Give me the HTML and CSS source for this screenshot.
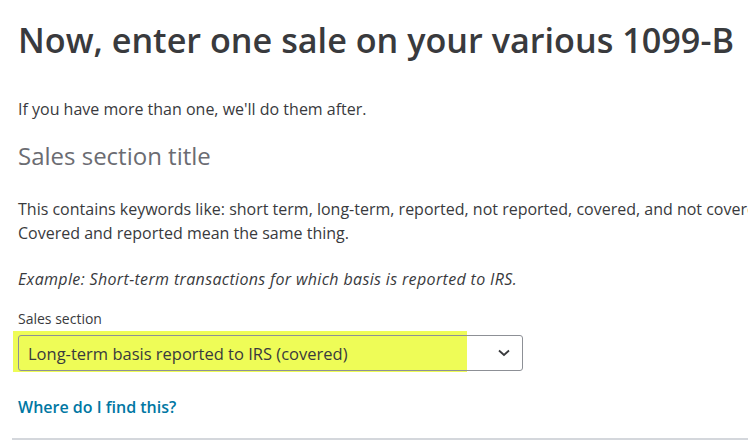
FILE: index.html
```html
<!DOCTYPE html>
<html lang="en">
<head>
  <meta charset="UTF-8">
  <title>1099-B sale</title>
  <link rel="stylesheet" href="styles.css">
</head>
<body>
  <div class="page">
    <h1 class="title">Now, enter one sale on your various 1099-B</h1>
    <p class="intro">If you have more than one, we'll do them after.</p>
    <h2 class="section-title">Sales section title</h2>
    <p class="body-text">This contains keywords like: short term, long-term, reported, not reported, covered, and not covered.<br>Covered and reported mean the same thing.</p>
    <p class="example">Example: Short-term transactions for which basis is reported to IRS.</p>
    <div class="field">
      <label class="field-label">Sales section</label>
      <div class="select-wrap">
        <div class="highlight"></div>
        <div class="select">
          <span class="select-value">Long-term basis reported to IRS (covered)</span>
          <svg class="chevron" width="12" height="8" viewBox="0 0 12 8"><path d="M1 1.5 L6 6 L11 1.5" fill="none" stroke="#393a3d" stroke-width="1.8"/></svg>
        </div>
      </div>
    </div>
    <a class="help-link" href="#">Where do I find this?</a>
    <div class="divider"></div>
  </div>
</body>
</html>
```

FILE: styles.css
```css
body {
  margin: 0;
  background: #fff;
  font-family: 'Open Sans', 'Noto Sans', sans-serif;
  color: #393a3d;
  overflow: hidden;
}
.page {
  padding: 18px 0 0 18px;
  overflow: hidden;
}
.title {
  margin: 0;
  font-size: 34.2px;
  font-weight: 600;
  line-height: 44px;
  color: #393a3d;
  white-space: nowrap;
}
.intro {
  margin: 37px 0 0;
  font-size: 16px;
  line-height: 20px;
  color: #393a3d;
}
.section-title {
  margin: 23px 0 0;
  font-size: 24px;
  font-weight: 400;
  line-height: 28px;
  color: #6b6c72;
}
.body-text {
  margin: 27px 0 0;
  font-size: 16px;
  line-height: 24px;
  white-space: nowrap;
}
.example {
  margin: 22px 0 0;
  font-size: 16px;
  line-height: 24px;
  font-style: italic;
  letter-spacing: 0.35px;
}
.field {
  margin-top: 20px;
}
.field-label {
  display: block;
  font-size: 14px;
  line-height: 16px;
  color: #393a3d;
}
.select-wrap {
  position: relative;
  margin-top: 8px;
  width: 505px;
}
.highlight {
  position: absolute;
  left: -5px;
  top: -4px;
  width: 454px;
  height: 41px;
  background: #eefc57;
}
.select {
  position: relative;
  display: flex;
  align-items: center;
  justify-content: space-between;
  height: 36px;
  padding: 0 12px 0 9px;
  border: 1px solid #8d9096;
  border-radius: 3px;
  box-sizing: border-box;
}
.select-value {
  font-size: 16.5px;
  color: #393a3d;
}
.chevron {
  display: block;
}
.help-link {
  display: block;
  width: max-content;
  margin-top: 26px;
  font-size: 16px;
  line-height: 20px;
  font-weight: 600;
  color: #0077a3;
  text-decoration: none;
}
.divider {
  margin: 21px 0 0 -6px;
  height: 2px;
  background: #d4d7dc;
}
```
